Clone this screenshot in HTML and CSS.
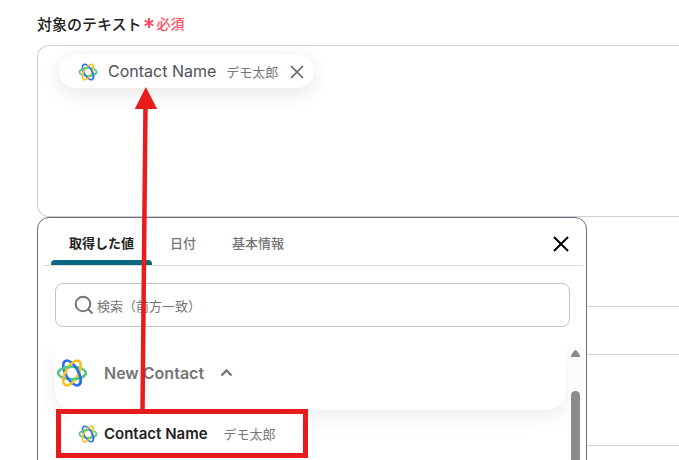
FILE: index.html
```html
<!DOCTYPE html>
<html lang="ja">
<head>
    <meta charset="UTF-8">
    <title>対象のテキスト</title>
    <link rel="stylesheet" href="styles.css">
</head>
<body>
    <svg class="symbols" aria-hidden="true">
        <symbol id="logo" viewBox="0 0 32 32">
            <g fill="none" stroke-width="2.5">
                <ellipse cx="16" cy="16" rx="13.8" ry="6.3" stroke="#57c785"/>
                <ellipse cx="16" cy="16" rx="13.8" ry="6.3" stroke="#2470f5" transform="rotate(60 16 16)"/>
                <ellipse cx="16" cy="16" rx="13.8" ry="6.3" stroke="#fcc018" transform="rotate(-60 16 16)"/>
                <path d="M2.2 16A13.8 6.3 0 0 1 16 9.7" stroke="#57c785"/>
                <path d="M29.8 16A13.8 6.3 0 0 1 16 22.3" stroke="#57c785"/>
                <path d="M22.9 27.95A13.8 6.3 60 0 0 21.46 12.85" stroke="#2470f5"/>
            </g>
        </symbol>
    </svg>
    <main class="page">
        <div class="field">
            <h2 class="field-label">対象のテキスト <span class="required"><svg width="12" height="12" viewBox="0 0 12 12"><path d="M6 1V11M1.7 3.5L10.3 8.5M10.3 3.5L1.7 8.5"/></svg>必須</span></h2>
            <div class="text-box">
                <span class="chip">
                    <svg class="logo-small"><use href="#logo"/></svg>
                    <span class="chip-name">Contact Name</span>
                    <span class="chip-value">デモ太郎</span>
                    <button type="button" class="chip-remove" aria-label="削除"><svg width="14" height="14" viewBox="0 0 14 14"><path d="M1 1L13 13M13 1L1 13"/></svg></button>
                </span>
            </div>
            <section class="panel">
                <header class="panel-header">
                    <nav class="tabs">
                        <button type="button" class="tab active">取得した値</button>
                        <button type="button" class="tab">日付</button>
                        <button type="button" class="tab">基本情報</button>
                    </nav>
                    <button type="button" class="panel-close" aria-label="閉じる"><svg width="16" height="16" viewBox="0 0 16 16"><path d="M1 1L15 15M15 1L1 15"/></svg></button>
                </header>
                <label class="search">
                    <svg width="20" height="20" viewBox="0 0 20 20"><circle cx="9" cy="9" r="7.3"/><path d="M14.2 14.2L18.5 18.5"/></svg>
                    <input type="text" placeholder="検索（前方一致）" aria-label="検索">
                </label>
                <div class="results">
                    <div class="result-list">
                        <button type="button" class="group">
                            <svg class="logo-large"><use href="#logo"/></svg>
                            <span>New Contact</span>
                            <svg class="caret" width="13" height="9" viewBox="0 0 13 9"><path d="M1.5 7.5L6.5 2.5L11.5 7.5"/></svg>
                        </button>
                        <div class="item-frame">
                            <button type="button" class="item">
                                <svg class="logo-small"><use href="#logo"/></svg>
                                <span class="item-name">Contact Name</span>
                                <span class="item-value">デモ太郎</span>
                            </button>
                        </div>
                    </div>
                    <div class="scrollbar">
                        <svg width="9" height="7" viewBox="0 0 9 7"><path d="M4.5 0Q5.4 0 6 1L9 5.4V7H0V5.4L3 1Q3.6 0 4.5 0Z"/></svg>
                        <div class="thumb"></div>
                    </div>
                </div>
            </section>
        </div>
        <input type="text" class="line-box" aria-label="入力">
        <textarea class="area-box" aria-label="内容"></textarea>
        <svg class="arrow" width="24" height="324" viewBox="0 0 24 324">
            <path d="M11.5 20L8.5 324" stroke="#e81c1c" stroke-width="4.5"/>
            <path d="M11.8 0L23.2 22H.8Z" fill="#e81c1c"/>
        </svg>
    </main>
</body>
</html>
```
FILE: styles.css
```css
* {
    box-sizing: border-box;
}
body {
    margin: 0;
    font-family: Inter, "Noto Sans CJK JP", sans-serif;
    color: #222;
    background: #fff;
}
svg {
    flex: none;
}
button {
    padding: 0;
    border: none;
    background: none;
    font-family: inherit;
    cursor: pointer;
}
.symbols {
    position: absolute;
    width: 0;
    height: 0;
}
.page {
    position: relative;
    height: 100vh;
    padding: 11px 0 0 37px;
    overflow: hidden;
}
.field {
    position: relative;
}
.field-label {
    display: flex;
    align-items: center;
    gap: 1px;
    height: 24px;
    margin: 0 0 10px;
    font-size: 15px;
    font-weight: 500;
}
.required {
    display: flex;
    align-items: center;
    gap: 2px;
    color: #ff4d61;
    font-size: 14px;
}
.required path {
    stroke: #ff4d61;
    stroke-width: 2;
}
.text-box {
    height: 172px;
    padding: 9px 21px;
    border: 1px solid #cdd0d9;
    border-right: none;
    border-radius: 12px 0 0 12px;
}
.chip {
    display: inline-flex;
    align-items: center;
    height: 33px;
    padding: 0 10px 0 19px;
    border-radius: 17px;
    box-shadow: 0 5px 20px rgba(0, 0, 0, 0.1);
}
.logo-small {
    width: 20px;
    height: 20px;
}
.chip-name {
    margin: 0 10px;
    color: #4e535a;
    font-size: 16px;
}
.chip-value {
    color: #777;
    font-size: 13px;
}
.chip-name,
.chip-value {
    padding-bottom: 1px;
}
.chip-remove {
    display: flex;
    margin-left: 12px;
}
.chip-remove path {
    stroke: #666;
    stroke-width: 1.7;
}
.panel {
    position: absolute;
    top: 206px;
    left: 0;
    width: 550px;
    max-width: 100%;
    height: 300px;
    padding: 0 3px 0 5px;
    border: 1px solid #6c6e74;
    border-radius: 12px;
    background: #fff;
}
.panel-header {
    display: flex;
    align-items: center;
    justify-content: space-between;
    height: 48px;
    padding: 0 14px 0 8px;
    border-bottom: 1px solid #dedede;
}
.tabs {
    display: flex;
    align-self: stretch;
}
.tab {
    position: relative;
    padding: 2px 18px 0;
    color: #757575;
    font-size: 13px;
    font-weight: 500;
}
.tab.active {
    color: #222;
    font-weight: 700;
}
.tab.active::after {
    content: "";
    position: absolute;
    left: 0;
    right: 0;
    bottom: 0;
    height: 5px;
    border-radius: 4px 4px 0 0;
    background: #09677f;
}
.panel-close {
    display: flex;
    padding-top: 4px;
}
.panel-close path {
    stroke: #000;
    stroke-width: 2;
}
.search {
    display: flex;
    align-items: center;
    gap: 3px;
    height: 44px;
    margin: 17px 13px 0 12px;
    padding: 0 18px;
    border: 1px solid #c4c4c4;
    border-radius: 8px;
}
.search svg {
    fill: none;
    stroke: #757575;
    stroke-width: 2;
}
.search input {
    flex: 1;
    min-width: 0;
    padding: 2px 0 0;
    border: none;
    outline: none;
    background: none;
    font-family: inherit;
    font-size: 13px;
}
.search input::placeholder {
    color: #757575;
}
.results {
    display: flex;
    height: 180px;
    margin-top: 18px;
}
.result-list {
    flex: 1;
    padding-left: 12px;
    overflow: hidden;
}
.group {
    display: flex;
    align-items: center;
    width: 511px;
    max-width: 100%;
    height: 65px;
    padding: 0 0 10px 1px;
    border-radius: 0 0 20px 20px;
    color: #757575;
    font-size: 16px;
    font-weight: 600;
    box-shadow: 0 8px 20px rgba(0, 0, 0, 0.07);
}
.logo-large {
    width: 32px;
    height: 32px;
    margin-right: 16px;
}
.caret {
    margin-left: 16px;
    fill: none;
    stroke: #757575;
    stroke-width: 2.4;
}
.item-frame {
    position: relative;
    display: inline-block;
    margin: -1px 0 0 1px;
    border: 5px solid #e81c1c;
    background: #fff;
}
.item {
    display: flex;
    align-items: center;
    width: 242px;
    height: 39px;
    padding-left: 17px;
    border-radius: 20px;
    box-shadow: 0 0 8px rgba(0, 0, 0, 0.05);
}
.item-name {
    margin: 0 16px 0 6px;
    color: #222;
    font-size: 15px;
    font-weight: 600;
}
.item-value {
    color: #777;
    font-size: 13px;
}
.scrollbar {
    display: flex;
    flex-direction: column;
    align-items: center;
    gap: 34px;
    width: 15px;
    padding-top: 5px;
    background: #fcfcfc;
}
.scrollbar path {
    fill: #8b8b8b;
}
.thumb {
    flex: 1;
    width: 9px;
    border-radius: 5px 5px 0 0;
    background: #8b8b8b;
}
.line-box,
.area-box {
    display: block;
    width: 100%;
    border: 1px solid #cdd0d9;
    border-right: none;
    border-radius: 12px 0 0 12px;
    outline: none;
}
.line-box {
    height: 49px;
    margin: 89px 0 90px;
}
.area-box {
    height: 172px;
    resize: none;
}
.arrow {
    position: absolute;
    top: 87px;
    left: 134px;
}
```
